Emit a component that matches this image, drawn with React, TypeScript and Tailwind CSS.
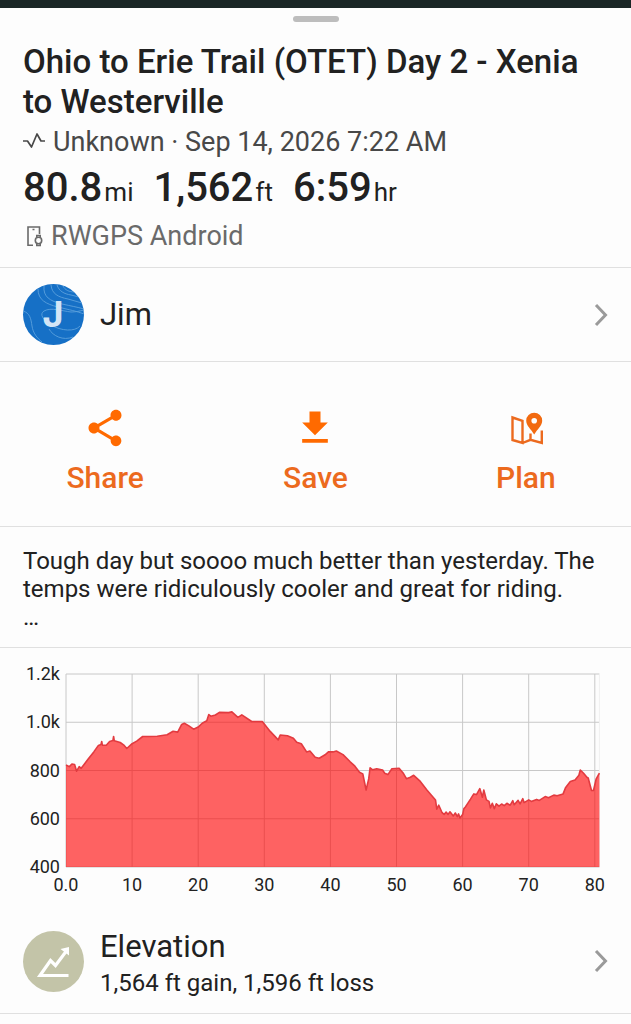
import type { ReactNode } from 'react'

// [mile, feet]
const ELEVATION: [number, number][] = [
  [0, 823], [0.5, 816], [0.9, 827], [1.3, 825], [1.6, 797], [2, 816], [2.3, 809], [3.3, 845],
  [4.2, 877], [4.9, 904], [5.3, 908], [5.4, 920], [5.5, 905], [6.1, 905], [6.6, 920], [7.1, 924],
  [7.2, 941], [7.3, 923], [8.2, 916], [8.8, 904], [9.2, 891], [10, 911], [10.7, 922], [11.6, 941],
  [12.5, 941], [13.8, 942], [15.3, 948], [16.2, 963], [16.9, 959], [17.5, 991], [17.9, 996],
  [18.6, 985], [19.3, 971], [20, 980], [20.6, 996], [21.3, 1006], [21.6, 1032], [21.9, 1025],
  [22.6, 1030], [23.2, 1041], [24.6, 1040], [25.1, 1043], [26, 1020], [26.6, 1031], [28.1, 1003],
  [29.7, 1003], [30.9, 962], [32.1, 927], [32.4, 947], [33.5, 944], [34.4, 934], [34.9, 917],
  [35.6, 911], [36.4, 877], [36.9, 881], [37.7, 855], [38.3, 851], [39.2, 865], [39.7, 877],
  [40.4, 877], [40.9, 881], [41.9, 866], [43, 836], [43.7, 818], [44.4, 793], [44.9, 786],
  [45.4, 719], [45.8, 765], [46, 811], [46.4, 803], [47, 807], [47.9, 802], [48.2, 789],
  [48.7, 783], [49.3, 807], [50.4, 809], [51, 790], [51.5, 766], [52.1, 772], [52.6, 780],
  [53.6, 755], [54.6, 719], [55.9, 678], [56.1, 640], [56.4, 656], [56.9, 625], [57.2, 618],
  [57.5, 628], [57.8, 618], [58.1, 629], [58.6, 612], [58.9, 624], [59.2, 609], [59.4, 620],
  [59.6, 603], [60, 617], [60.2, 642], [60.4, 648], [60.8, 665], [61.2, 681], [61.7, 703],
  [62.1, 700], [62.6, 725], [63, 689], [63.2, 719], [63.6, 678], [64, 672], [64.2, 645],
  [64.5, 664], [64.8, 642], [65.1, 662], [65.5, 652], [65.9, 661], [66.3, 654], [66.7, 664],
  [67.2, 656], [67.6, 675], [67.8, 658], [68.4, 676], [68.7, 662], [69.1, 683], [69.3, 667],
  [70, 678], [70.4, 672], [71.2, 680], [71.6, 676], [72.5, 692], [73, 687], [73.8, 698],
  [74.3, 695], [75.2, 703], [75.6, 730], [76.3, 755], [77, 761], [77.6, 780], [77.8, 802],
  [78.3, 789], [78.8, 772], [79, 769], [79.5, 717], [79.8, 717], [80.2, 764], [80.7, 789],
]

const X_TICKS = [0, 10, 20, 30, 40, 50, 60, 70, 80]
const Y_TICKS = [
  { value: 1200, label: '1.2k' },
  { value: 1000, label: '1.0k' },
  { value: 800, label: '800' },
  { value: 600, label: '600' },
  { value: 400, label: '400' },
]

const TOP = 26
const BOTTOM = 219

const xPos = (mile: number) => 66 + mile * 6.61
const yPos = (feet: number) => TOP + ((1200 - feet) / 800) * (BOTTOM - TOP)

function ElevationChart() {
  const line = ELEVATION.map(([m, f]) => `${xPos(m).toFixed(1)},${yPos(f).toFixed(1)}`).join(' L')
  const right = xPos(80.7)

  return (
    <svg viewBox="0 0 631 257" className="block w-full" role="img" aria-label="Elevation profile">
      <g stroke="#c8c8c8" strokeWidth="1">
        {Y_TICKS.map((t) => (
          <line key={t.value} x1="66" x2={right} y1={yPos(t.value)} y2={yPos(t.value)} />
        ))}
        {X_TICKS.map((t) => (
          <line key={t} x1={xPos(t)} x2={xPos(t)} y1={TOP} y2={BOTTOM} />
        ))}
        <line x1={right} x2={right} y1={TOP} y2={BOTTOM} stroke="#f0f0f0" />
      </g>
      <path d={`M${line} L${right},${BOTTOM} L66,${BOTTOM} Z`} fill="#f00" fillOpacity="0.61" />
      <path d={`M${line}`} fill="none" stroke="#e23b40" strokeWidth="1.6" strokeLinejoin="round" />
      <g fill="#222" fontSize="18">
        {Y_TICKS.map((t) => (
          <text key={t.value} x="60" y={yPos(t.value) + 6} textAnchor="end">{t.label}</text>
        ))}
        {X_TICKS.map((t) => (
          <text key={t} x={xPos(t)} y="243" textAnchor="middle">{t === 0 ? '0.0' : t}</text>
        ))}
      </g>
    </svg>
  )
}

function Chevron() {
  return (
    <svg viewBox="0 0 16 24" className="h-6 w-4 shrink-0" fill="none" stroke="#9a9a9a" strokeWidth="3">
      <path d="M3 2l9.5 10L3 22" />
    </svg>
  )
}

function Stat({ value, unit }: { value: string; unit: string }) {
  return (
    <span>
      <span className="text-[40px] font-medium">{value}</span>
      <span className="ml-0.5 text-[26px]">{unit}</span>
    </span>
  )
}

function Action({ label, children }: { label: string; children: ReactNode }) {
  return (
    <button type="button" className="flex flex-col items-center text-[#ec6a1e]">
      {children}
      <span className="mt-2 text-[30px] leading-10 font-medium">{label}</span>
    </button>
  )
}

export default function App() {
  return (
    <div className="min-h-screen bg-[#1a2726] pt-2 font-[Roboto,sans-serif] text-[#212121]">
      <main className="min-h-screen bg-[#fdfdfd] pt-2">
        <div className="mx-auto h-1.5 w-[46px] rounded-full bg-[#bdbdbd]" />

        <header className="border-b border-[#e0e0e0] px-[23px] pt-5 pb-[15px]">
          <h1 className="text-[33px] leading-10 font-medium">
            Ohio to Erie Trail (OTET) Day 2 - Xenia to Westerville
          </h1>
          <p className="mt-1 flex items-center gap-2 text-[27px] leading-8 text-[#484848]">
            <svg viewBox="0 0 22 18" className="h-[18px] w-[22px]" fill="none" stroke="currentColor" strokeWidth="1.7" strokeLinejoin="round">
              <path d="M0 8h4.500l4 6L14 1l4 7h4" />
            </svg>
            Unknown · Sep 14, 2026 7:22 AM
          </p>
          <p className="mt-2 flex gap-5 leading-11">
            <Stat value="80.8" unit="mi" />
            <Stat value="1,562" unit="ft" />
            <Stat value="6:59" unit="hr" />
          </p>
          <p className="mt-0.5 flex items-center gap-2 text-[27px] leading-8 text-[#6a6a6a]">
            <svg viewBox="0 0 20 22" className="h-[22px] w-5" fill="none" stroke="currentColor" strokeWidth="1.6">
              <path d="M10 20.200H5V2h11.500v7M9.500 4.500h2" />
              <circle cx="15.500" cy="15.500" r="3.200" />
              <path d="M13.800 12.500v-2h3.400v2M13.800 18.500v2h3.400v-2" />
            </svg>
            RWGPS Android
          </p>
        </header>

        <a href="#jim" className="flex items-center border-b border-[#e0e0e0] py-4 pr-[22px] pl-[23px]">
          <span className="flex size-[61px] items-center justify-center overflow-hidden rounded-full bg-[#1670c6]">
            <svg viewBox="0 0 61 61" className="size-[61px]" aria-hidden="true">
              <g fill="none" stroke="#5ba0dd" strokeWidth="0.9">
                <path d="M15 5c0 11 8 15 20 18s18 4 26 7" />
                <path d="M21 2c-1 11 6 15 18 18 9 2 15 3 22 5" />
                <path d="M28 1c1 9 7 12 17 14l14 4" />
                <path d="M34 1c2 6 7 9 14 10l8 2" />
                <path d="M40 2c2 4 6 6 12 6" />
                <path d="M0 27c7 2 8 8 9 15s5 12 10 16" />
                <path d="M57 42c-5 6-19 5-29-1-8-5-12-11-7-14 7-4 18 0 27 1 5 0 9-1 13-2" />
                <path d="M50 53c-10 4-20-1-24-8" />
              </g>
              <text x="30" y="43" textAnchor="middle" fontSize="36" fontWeight="700" fontFamily="Inter, sans-serif" fill="#d3e5f6">J</text>
            </svg>
          </span>
          <span className="ml-4 flex-1 text-[31px] leading-9">Jim</span>
          <Chevron />
        </a>

        <div className="grid grid-cols-3 border-b border-[#e0e0e0] pt-11 pb-7">
          <Action label="Share">
            <svg viewBox="0 0 24 24" className="size-11 fill-[#ff6a00]">
              <path d="M18 16.080c-.76 0-1.440.3-1.960.77L8.910 12.700c.05-.23.09-.46.09-.7s-.04-.47-.09-.7l7.050-4.110c.54.5 1.250.81 2.040.81 1.660 0 3-1.340 3-3s-1.340-3-3-3-3 1.340-3 3c0 .24.04.47.09.7L8.040 9.810C7.500 9.310 6.790 9 6 9c-1.660 0-3 1.340-3 3s1.340 3 3 3c.79 0 1.500-.31 2.040-.81l7.120 4.160c-.05.21-.08.43-.08.65 0 1.610 1.310 2.920 2.920 2.920s2.920-1.310 2.920-2.920-1.310-2.920-2.920-2.920z" />
            </svg>
          </Action>
          <Action label="Save">
            <svg viewBox="0 0 24 24" className="size-11 fill-[#ff6a00]">
              <path d="M19 9h-4V3H9v6H5l7 7 7-7zM5 18v2h14v-2H5z" />
            </svg>
          </Action>
          <Action label="Plan">
            <svg viewBox="0 0 44 44" className="size-11" fill="none" stroke="currentColor" strokeWidth="2.400">
              <path d="M8.500 11.500l10 3.300v22.200l-10-3zM18.500 37l8-3.200L37.800 37V24.500M26.500 34v-6.500" />
              <path
                fill="#f26a10"
                stroke="none"
                fillRule="evenodd"
                d="M30.200 6.700a8 8 0 0 0-8 8c0 5 5 8.500 8 13.800 3-5.300 8-8.800 8-13.800a8 8 0 0 0-8-8zm0 5.200a2.800 2.800 0 1 1 0 5.600 2.800 2.800 0 0 1 0-5.600z"
              />
            </svg>
          </Action>
        </div>

        <p className="border-b border-[#e0e0e0] px-[23px] pt-5 pb-4 text-[24px] leading-7">
          Tough day but soooo much better than yesterday. The temps were ridiculously cooler and great for riding.
          <br />…
        </p>

        <ElevationChart />

        <a href="#elevation" className="flex items-center border-b border-[#e0e0e0] pt-4 pr-[22px] pb-3 pl-[23px]">
          <svg viewBox="0 0 61 61" className="size-[61px] shrink-0">
            <circle cx="30.500" cy="30.500" r="30.500" fill="#c3c4a8" />
            <path d="M45.500 44.500H17L27.500 29.500l5 5L43 20.500" fill="none" stroke="#fff" strokeWidth="3.200" />
            <path d="M37.500 18L46 16v8.500z" fill="#fff" />
          </svg>
          <span className="ml-4 flex flex-1 flex-col pt-2">
            <span className="text-[31px] leading-9">Elevation</span>
            <span className="text-[24px] leading-9">1,564 ft gain, 1,596 ft loss</span>
          </span>
          <Chevron />
        </a>
      </main>
    </div>
  )
}
